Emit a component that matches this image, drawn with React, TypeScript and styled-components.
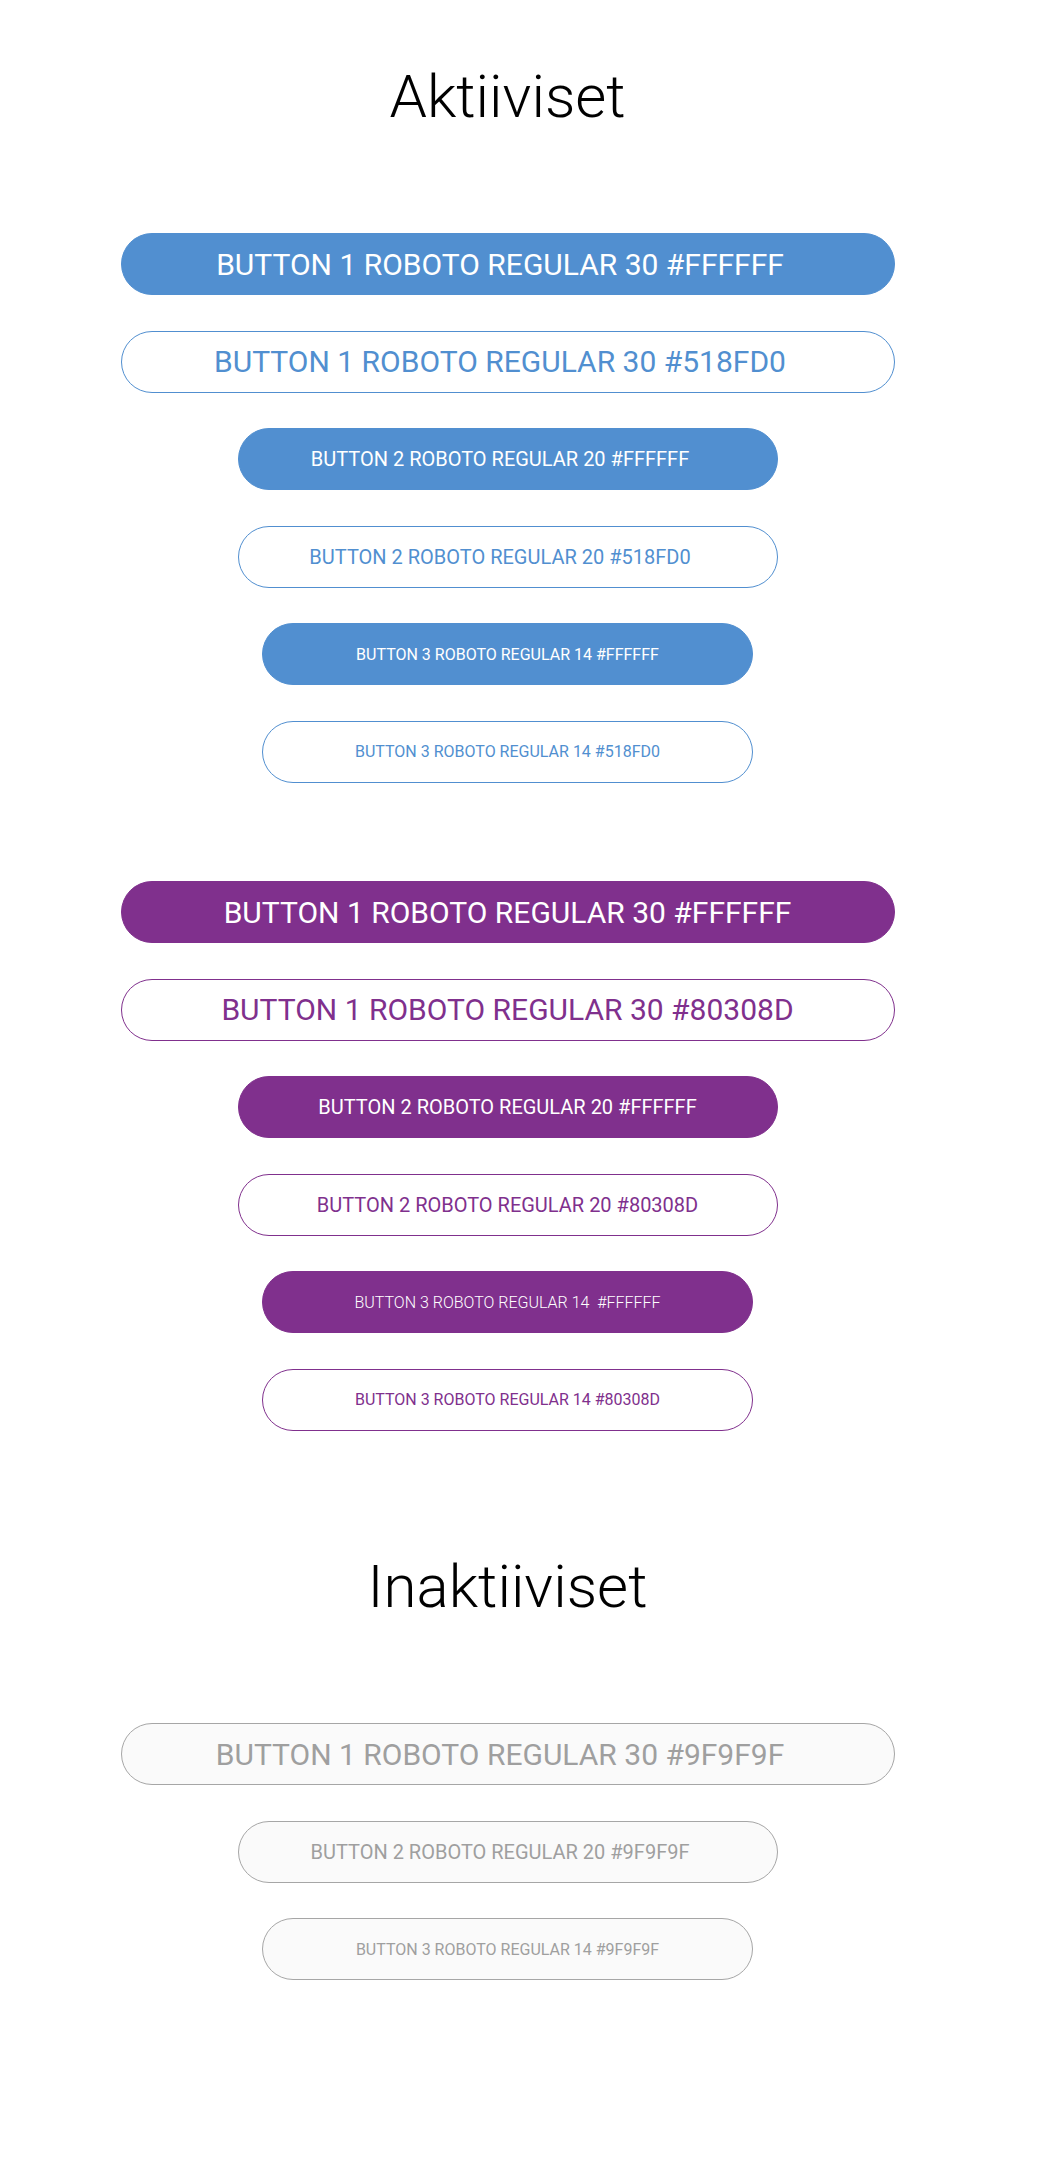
import styled, { createGlobalStyle, css } from 'styled-components';

const GlobalStyle = createGlobalStyle`
  html, body {
    margin: 0;
    padding: 0;
    background: #ffffff;
  }

  body {
    font-family: Roboto, 'Liberation Sans', sans-serif;
  }
`;

type Tone = 'blue' | 'purple' | 'grey';
type Size = 1 | 2 | 3;
type Variant = 'filled' | 'outline' | 'inactive';

const colors: Record<Tone, string> = {
  blue: '#518FD0',
  purple: '#80308D',
  grey: '#9F9F9F',
};

const widths: Record<Size, number> = { 1: 774, 2: 540, 3: 491 };
const fontSizes: Record<Size, number> = { 1: 30, 2: 20, 3: 16 };

const ButtonSpec = [
  { size: 1, label: 'BUTTON 1 ROBOTO REGULAR 30' },
  { size: 2, label: 'BUTTON 2 ROBOTO REGULAR 20' },
  { size: 3, label: 'BUTTON 3 ROBOTO REGULAR 14' },
] as const;

const App = () => {
  return (
    <>
      <GlobalStyle />
      <Page>
        <Title>Aktiiviset</Title>
        <ButtonGroup>
          {ButtonSpec.map(({ size, label }) => (
            <ButtonPair key={size}>
              <Button $tone="blue" $size={size} $variant="filled" $shift={size !== 3}>
                {label} #FFFFFF
              </Button>
              <Button $tone="blue" $size={size} $variant="outline" $shift={size !== 3}>
                {label} #518FD0
              </Button>
            </ButtonPair>
          ))}
        </ButtonGroup>

        <ButtonGroup $spaced>
          {ButtonSpec.map(({ size, label }) => (
            <ButtonPair key={size}>
              <Button $tone="purple" $size={size} $variant="filled" $light={size === 3}>
                {size === 3 ? `${label}\u00a0 #FFFFFF` : `${label} #FFFFFF`}
              </Button>
              <Button $tone="purple" $size={size} $variant="outline">
                {label} #80308D
              </Button>
            </ButtonPair>
          ))}
        </ButtonGroup>

        <Title $spaced>Inaktiiviset</Title>
        <ButtonGroup>
          {ButtonSpec.map(({ size, label }) => (
            <Button key={size} $tone="grey" $size={size} $variant="inactive" $shift={size !== 3}>
              {label} #9F9F9F
            </Button>
          ))}
        </ButtonGroup>
      </Page>
    </>
  );
};

const Page = styled.main`
  display: flex;
  flex-direction: column;
  align-items: center;
  width: 1015px;
  padding-bottom: 184px;
`;

const Title = styled.h1<{ $spaced?: boolean }>`
  margin: ${({ $spaced }) => ($spaced ? '121.5px' : '62px')} 0 101px;
  font-family: Roboto, 'Liberation Sans', sans-serif;
  font-size: 60px;
  font-weight: 300;
  line-height: 70px;
  color: #000000;
`;

const ButtonGroup = styled.section<{ $spaced?: boolean }>`
  display: flex;
  flex-direction: column;
  align-items: center;
  gap: 35.5px;
  margin-top: ${({ $spaced }) => ($spaced ? '98.5px' : '0')};
`;

const ButtonPair = styled.div`
  display: contents;
`;

const Button = styled.button<{
  $tone: Tone;
  $size: Size;
  $variant: Variant;
  $light?: boolean;
  $shift?: boolean;
}>`
  display: flex;
  justify-content: center;
  align-items: center;
  box-sizing: border-box;
  width: ${({ $size }) => widths[$size]}px;
  height: 62px;
  padding: 0 ${({ $shift }) => ($shift ? '15px' : '0')} 0 0;
  border-radius: 31px;
  font-family: Roboto, 'Liberation Sans', sans-serif;
  font-size: ${({ $size }) => fontSizes[$size]}px;
  font-weight: ${({ $light }) => ($light ? 300 : 400)};
  white-space: pre;
  cursor: pointer;

  ${({ $tone, $variant }) =>
    $variant === 'filled'
      ? css`
          color: #ffffff;
          background: ${colors[$tone]};
          border: 1px solid ${colors[$tone]};
        `
      : $variant === 'outline'
        ? css`
            color: ${colors[$tone]};
            background: #ffffff;
            border: 1px solid ${colors[$tone]};
          `
        : css`
            color: ${colors[$tone]};
            background: #fafafa;
            border: 1px solid #a6a6a6;
            cursor: default;
          `}
`;

export default App;
